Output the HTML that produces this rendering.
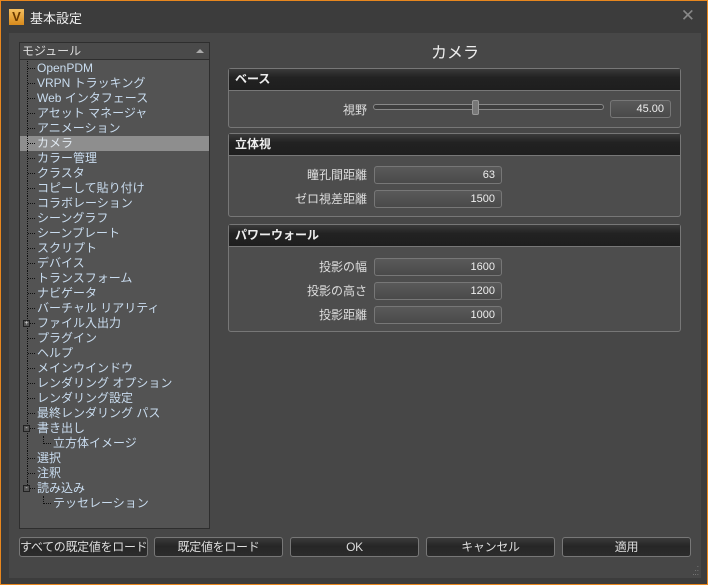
<!DOCTYPE html>
<html><head><meta charset="utf-8"><style>
*{margin:0;padding:0;box-sizing:border-box}
body{width:708px;height:585px;overflow:hidden;background:#444;font-family:"Liberation Sans","Noto Sans CJK JP",sans-serif;font-size:12px;color:#ddd;position:relative}
.win{position:absolute;left:0;top:0;width:708px;height:585px;border:1px solid #e8871e;background:#3c3c3c}
.title{position:absolute;left:8px;top:6px;height:20px;display:flex;align-items:center;font-size:13px;color:#eee}
.logo{width:15px;height:16px;background:linear-gradient(#f5c060,#d88a1c);margin-right:6px;color:#6a3a00;font-weight:bold;font-size:13px;line-height:16px;text-align:center}
.close{position:absolute;right:12px;top:5px;color:#888;font-size:17px}
.inner{position:absolute;left:8px;top:32px;width:692px;height:545px;background:#474747}
.tree{position:absolute;left:18px;top:41px;width:191px;height:487px;border:1px solid #2e2e2e;background:#535353}
.th{height:17px;background:#4a4a4a;border-bottom:1px solid #2e2e2e;padding-left:2px;line-height:16px;color:#ddd;position:relative}
.th:after{content:"";position:absolute;right:5px;top:6px;border-left:4px solid transparent;border-right:4px solid transparent;border-bottom:4px solid #aaa}
.it{position:absolute;left:0;height:15px;line-height:15px;color:#c9dcef;white-space:nowrap;width:189px}
.it.sel{background:#8e8e8e;color:#e0e8f0}
.dl{position:absolute;left:7px;top:0;height:15px;border-left:1px dotted #111}
.dh{position:absolute;top:7px;width:7px;border-top:1px dotted #111}
.box{position:absolute;left:3px;top:4px;width:7px;height:7px;background:#555;border:1px solid #222;font-size:7px;line-height:5px;text-align:center;color:#ddd}
.ct{position:absolute;left:430px;top:38px;font-size:16px;color:#eee}
.grp{position:absolute;left:227px;width:453px;border:1px solid #777;border-radius:3px;background:#4d4d4d}
.gh{height:22px;background:linear-gradient(#3a3a3a,#222 40%,#1e1e1e);border-bottom:1px solid #777;font-weight:bold;color:#eee;padding-left:6px;line-height:20px;font-size:12px}
.lbl{position:absolute;right:313px;font-size:12px;color:#ddd;width:120px;text-align:right}
.fld{position:absolute;left:145px;width:128px;height:18px;border:1px solid #777;border-radius:3px;background:linear-gradient(#5a5a5a,#4a4a4a);text-align:right;padding-right:6px;line-height:16px;color:#eee;font-size:11px}
.btn{position:absolute;top:536px;height:20px;border:1px solid #777;border-radius:3px;background:linear-gradient(#3a3a3a,#262626 45%,#2c2c2c);color:#ddd;text-align:center;line-height:18px;font-size:12px;white-space:nowrap;letter-spacing:-0.3px;overflow:hidden}
</style></head><body>
<div class="win">
<div class="title"><div class="logo">V</div>基本設定</div>
<div class="close">✕</div>
<div class="inner"></div>
<div class="tree"><div class="th">モジュール</div>
<div style="position:relative">
<div class="it" style="top:1px"><span class="dl"></span><span class="dh" style="left:8px"></span><span style="position:absolute;left:17px">OpenPDM</span></div>
<div class="it" style="top:16px"><span class="dl"></span><span class="dh" style="left:8px"></span><span style="position:absolute;left:17px">VRPN トラッキング</span></div>
<div class="it" style="top:31px"><span class="dl"></span><span class="dh" style="left:8px"></span><span style="position:absolute;left:17px">Web インタフェース</span></div>
<div class="it" style="top:46px"><span class="dl"></span><span class="dh" style="left:8px"></span><span style="position:absolute;left:17px">アセット マネージャ</span></div>
<div class="it" style="top:61px"><span class="dl"></span><span class="dh" style="left:8px"></span><span style="position:absolute;left:17px">アニメーション</span></div>
<div class="it sel" style="top:76px"><span class="dl"></span><span class="dh" style="left:8px"></span><span style="position:absolute;left:17px">カメラ</span></div>
<div class="it" style="top:91px"><span class="dl"></span><span class="dh" style="left:8px"></span><span style="position:absolute;left:17px">カラー管理</span></div>
<div class="it" style="top:106px"><span class="dl"></span><span class="dh" style="left:8px"></span><span style="position:absolute;left:17px">クラスタ</span></div>
<div class="it" style="top:121px"><span class="dl"></span><span class="dh" style="left:8px"></span><span style="position:absolute;left:17px">コピーして貼り付け</span></div>
<div class="it" style="top:136px"><span class="dl"></span><span class="dh" style="left:8px"></span><span style="position:absolute;left:17px">コラボレーション</span></div>
<div class="it" style="top:151px"><span class="dl"></span><span class="dh" style="left:8px"></span><span style="position:absolute;left:17px">シーングラフ</span></div>
<div class="it" style="top:166px"><span class="dl"></span><span class="dh" style="left:8px"></span><span style="position:absolute;left:17px">シーンプレート</span></div>
<div class="it" style="top:181px"><span class="dl"></span><span class="dh" style="left:8px"></span><span style="position:absolute;left:17px">スクリプト</span></div>
<div class="it" style="top:196px"><span class="dl"></span><span class="dh" style="left:8px"></span><span style="position:absolute;left:17px">デバイス</span></div>
<div class="it" style="top:211px"><span class="dl"></span><span class="dh" style="left:8px"></span><span style="position:absolute;left:17px">トランスフォーム</span></div>
<div class="it" style="top:226px"><span class="dl"></span><span class="dh" style="left:8px"></span><span style="position:absolute;left:17px">ナビゲータ</span></div>
<div class="it" style="top:241px"><span class="dl"></span><span class="dh" style="left:8px"></span><span style="position:absolute;left:17px">バーチャル リアリティ</span></div>
<div class="it" style="top:256px"><span class="dl"></span><span class="dh" style="left:8px"></span><span class="box">+</span><span style="position:absolute;left:17px">ファイル入出力</span></div>
<div class="it" style="top:271px"><span class="dl"></span><span class="dh" style="left:8px"></span><span style="position:absolute;left:17px">プラグイン</span></div>
<div class="it" style="top:286px"><span class="dl"></span><span class="dh" style="left:8px"></span><span style="position:absolute;left:17px">ヘルプ</span></div>
<div class="it" style="top:301px"><span class="dl"></span><span class="dh" style="left:8px"></span><span style="position:absolute;left:17px">メインウインドウ</span></div>
<div class="it" style="top:316px"><span class="dl"></span><span class="dh" style="left:8px"></span><span style="position:absolute;left:17px">レンダリング オプション</span></div>
<div class="it" style="top:331px"><span class="dl"></span><span class="dh" style="left:8px"></span><span style="position:absolute;left:17px">レンダリング設定</span></div>
<div class="it" style="top:346px"><span class="dl"></span><span class="dh" style="left:8px"></span><span style="position:absolute;left:17px">最終レンダリング パス</span></div>
<div class="it" style="top:361px"><span class="dl"></span><span class="dh" style="left:8px"></span><span class="box">-</span><span style="position:absolute;left:17px">書き出し</span></div>
<div class="it" style="top:376px"><span class="dl"></span><span class="dl" style="left:23px;height:8px"></span><span class="dh" style="left:24px"></span><span style="position:absolute;left:33px">立方体イメージ</span></div>
<div class="it" style="top:391px"><span class="dl"></span><span class="dh" style="left:8px"></span><span style="position:absolute;left:17px">選択</span></div>
<div class="it" style="top:406px"><span class="dl"></span><span class="dh" style="left:8px"></span><span style="position:absolute;left:17px">注釈</span></div>
<div class="it" style="top:421px"><span class="dl" style="height:8px"></span><span class="dh" style="left:8px"></span><span class="box">-</span><span style="position:absolute;left:17px">読み込み</span></div>
<div class="it" style="top:436px"><span class="dl" style="left:23px;height:8px"></span><span class="dh" style="left:24px"></span><span style="position:absolute;left:33px">テッセレーション</span></div>
</div></div>

<div class="ct">カメラ</div>
<div class="grp" style="top:67px;height:60px"><div class="gh">ベース</div>
<div class="lbl" style="top:32px">視野</div>
<div style="position:absolute;left:144px;top:35px;width:231px;height:6px;border:1px solid #888;border-radius:3px;background:#3e3e3e"></div>
<div style="position:absolute;left:243px;top:31px;width:7px;height:15px;border:1px solid #999;border-radius:2px;background:#777"></div>
<div class="fld" style="left:381px;width:61px;top:31px">45.00</div>
</div>
<div class="grp" style="top:132px;height:84px"><div class="gh">立体視</div>
<div class="lbl" style="top:32px">瞳孔間距離</div><div class="fld" style="top:32px">63</div>
<div class="lbl" style="top:56px">ゼロ視差距離</div><div class="fld" style="top:56px">1500</div>
</div>
<div class="grp" style="top:223px;height:108px"><div class="gh">パワーウォール</div>
<div class="lbl" style="top:33px">投影の幅</div><div class="fld" style="top:33px">1600</div>
<div class="lbl" style="top:57px">投影の高さ</div><div class="fld" style="top:57px">1200</div>
<div class="lbl" style="top:81px">投影距離</div><div class="fld" style="top:81px">1000</div>
</div>

<div class="btn" style="left:18px;width:129px">すべての既定値をロード</div>
<div class="btn" style="left:153px;width:129px">既定値をロード</div>
<div class="btn" style="left:289px;width:129px">OK</div>
<div class="btn" style="left:425px;width:129px">キャンセル</div>
<div class="btn" style="left:561px;width:129px">適用</div>
<div style="position:absolute;right:8px;bottom:9px;color:#888;font-size:8px;line-height:4px;text-align:right">.<br>..<br>...</div>
</div>
</body></html>
